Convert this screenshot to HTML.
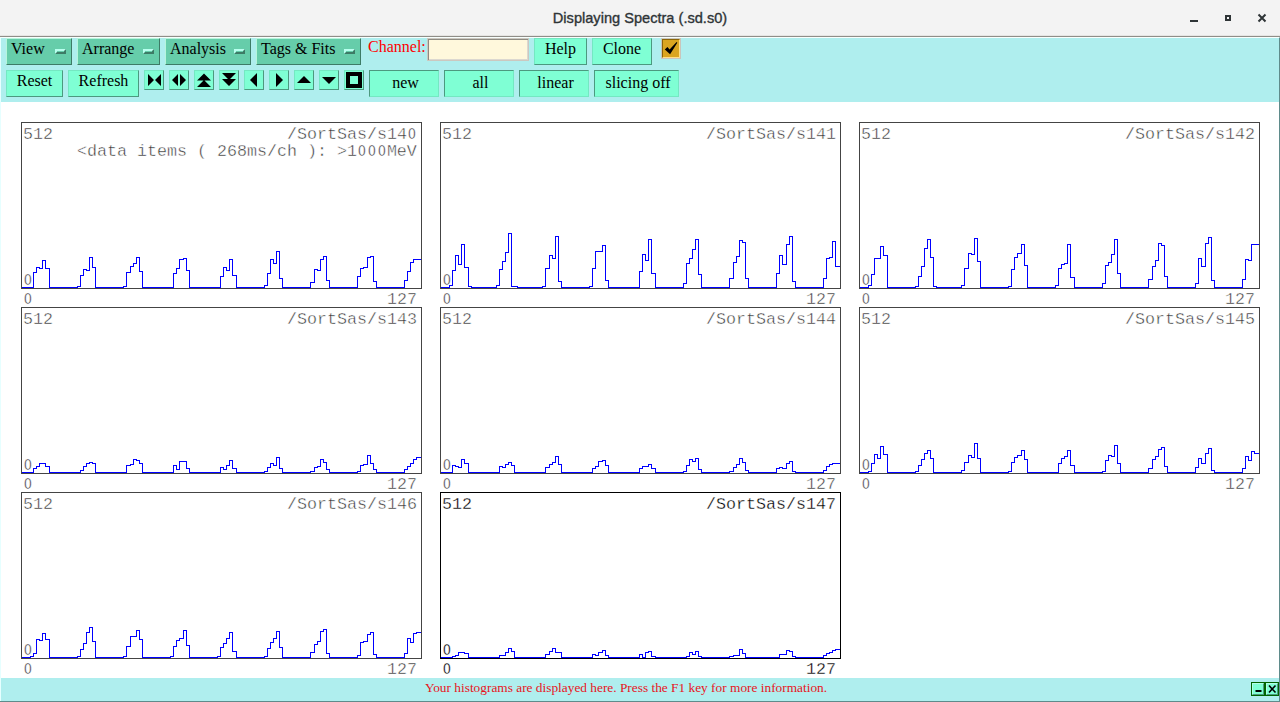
<!DOCTYPE html>
<html><head><meta charset="utf-8"><style>
*{margin:0;padding:0;box-sizing:border-box}
html,body{width:1280px;height:702px;overflow:hidden;background:#fff;position:relative}
body{font-family:"Liberation Serif",serif}
.abs{position:absolute}
#title{position:absolute;left:0;top:0;width:1280px;height:37px;background:#f3f3f3;border-bottom:1px solid #8f8d88;box-shadow:inset 0 -1px 0 #e6e5e3}
#title .tx{position:absolute;left:0;top:10px;width:1280px;text-align:center;font:14.6px "Liberation Sans",sans-serif;color:#2e3436;-webkit-text-stroke:0.35px #2e3436;line-height:17px}
#tool{position:absolute;left:0;top:37px;width:1280px;height:65px;background:#afeeee;border-top:1px solid #f8fffd;border-left:1px solid #e6ffff;border-right:1px solid #5f8b8b}
#plots{position:absolute;left:0;top:102px;width:1280px;height:576px;background:#fff;border-left:1px solid #e6ffff;border-right:1px solid #5f8b8b}
#status{position:absolute;left:0;top:678px;width:1280px;height:24px;background:#afeeee;border-bottom:1px solid #5f8b8b}
#status:before{content:"";position:absolute;left:0;top:0;width:1px;height:23px;background:#e6ffff}
#status:after{content:"";position:absolute;right:0;top:0;width:1px;height:24px;background:#5f8b8b}
.mb{position:absolute;top:38px;height:27px;background:#66cdaa;border:1px solid;border-color:#b6f5dc #3d7b66 #3d7b66 #b6f5dc;font-size:16px;color:#000}
.mb span{position:absolute;left:4px;top:1px;line-height:18px}
.ind{position:absolute;width:11px;height:5px;top:10px;border:2px solid;border-color:#b8ffee #3d7b66 #3d7b66 #b8ffee;background:#66cdaa}
.btn{position:absolute;background:#7fffd4;border:1px solid;border-color:#74e8c2 #4c997f #4c997f #74e8c2;font-size:16px;color:#000;text-align:center}
.sk{border-color:#4c997f #74e8c2 #74e8c2 #4c997f;padding-left:3px}
.ib{position:absolute;top:70px;width:20px;height:20px;background:#7fffd4;border:1px solid;border-color:#74e8c2 #4c997f #4c997f #74e8c2}
.ib svg{position:absolute;left:-1px;top:-1px}
.frame{position:absolute;width:401px;height:167px;border:1px solid #444}
.hs{position:absolute}
.t{position:absolute;font-family:"Liberation Mono",monospace;font-size:16.667px;line-height:17px;color:#333;white-space:pre;-webkit-text-stroke:0.45px #fff}
.t2{position:absolute;font-family:"Liberation Mono",monospace;font-size:16.667px;line-height:17px;color:#333;white-space:pre;-webkit-text-stroke:0.45px #fff}
.z{display:inline-block;width:10px;text-align:center;transform:scaleX(0.78)}
.r{text-align:right}
.frame.sel{border-color:#000}
.t.sel{color:#000;-webkit-text-stroke:0.3px #fff}
</style></head><body>
<div id="title"><div class="tx">Displaying Spectra (.sd.s0)</div>
<svg class="abs" style="left:1180px;top:5px" width="100" height="25" viewBox="1180 5 100 25">
<rect x="1190" y="20" width="8" height="2" fill="#2e3436"/>
<rect x="1226" y="16" width="4" height="4" fill="none" stroke="#2e3436" stroke-width="2"/>
<path d="M1258.5 14.5 L1265.5 21.5 M1265.5 14.5 L1258.5 21.5" stroke="#2e3436" stroke-width="2"/>
</svg></div>
<div id="tool"></div>
<div id="plots"></div>
<div id="status"><div class="abs" style="left:0;top:2px;width:1252px;text-align:center;font-size:13.35px;color:#e8141c;line-height:16px">Your histograms are displayed here. Press the F1 key for more information.</div>
<div class="abs" style="left:1251px;top:4px;width:28px;height:14px;background:#006400"></div>
<div class="abs" style="left:1252px;top:5px;width:12px;height:12px;background:#7fffd4;border:1px solid;border-color:#b2ffe6 #4c997f #4c997f #b2ffe6"></div>
<div class="abs" style="left:1266px;top:5px;width:12px;height:12px;background:#7fffd4;border:1px solid;border-color:#b2ffe6 #4c997f #4c997f #b2ffe6"></div>
<svg class="abs" style="left:1251px;top:4px" width="28" height="14"><rect x="4.5" y="8" width="6" height="2" fill="#000"/><path d="M18 3.5 L24.5 10.5 M24.5 3.5 L18 10.5" stroke="#000" stroke-width="1.6"/></svg>
</div>

<div class="mb" style="left:6px;width:66px"><span>View</span><div class="ind" style="left:48px"></div></div>
<div class="mb" style="left:77px;width:83px"><span>Arrange</span><div class="ind" style="left:65px"></div></div>
<div class="mb" style="left:165px;width:86px"><span>Analysis</span><div class="ind" style="left:68px"></div></div>
<div class="mb" style="left:256px;width:105px"><span>Tags &amp; Fits</span><div class="ind" style="left:87px"></div></div>
<div class="abs" style="left:368px;top:38px;font-size:16px;color:#ff0000;line-height:18px">Channel:</div>
<div class="abs" style="left:427px;top:38px;width:102px;height:23px;background:#fff8dc;border:1px solid #ccc8c0;box-shadow:inset 1px 1px 0 #8e8b82, inset -1px -1px 0 #dcd8d0"></div>
<div class="btn" style="left:534px;top:38px;width:53px;height:27px;line-height:20px">Help</div>
<div class="btn" style="left:592px;top:38px;width:60px;height:27px;line-height:20px">Clone</div>
<div class="abs" style="left:661px;top:38px;width:20px;height:21px;background:#daa520;border:1px solid #c9c5bc"></div>
<div class="abs" style="left:662px;top:39px;width:18px;height:19px;border:1px solid;border-color:#8b6508 #ffe08a #ffe08a #8b6508"></div>
<svg class="abs" style="left:656px;top:34px" width="30" height="30" viewBox="656 34 30 30"><path d="M664.8 49.6 L667.4 46.9 L669.6 49.4 L676.6 41.9 L677.3 42.7 L670.1 54.2 Z" fill="#000"/></svg>

<div class="btn" style="left:6px;top:70px;width:57px;height:27px;line-height:20px">Reset</div>
<div class="btn" style="left:68px;top:70px;width:71px;height:27px;line-height:20px">Refresh</div>
<div class="ib" style="left:144px"></div>
<div class="ib" style="left:169px"></div>
<div class="ib" style="left:194px"></div>
<div class="ib" style="left:219px"></div>
<div class="ib" style="left:244px"></div>
<div class="ib" style="left:269px"></div>
<div class="ib" style="left:294px"></div>
<div class="ib" style="left:319px"></div>
<div class="ib" style="left:344px"></div>
<svg class="abs" style="left:140px;top:66px" width="230" height="30" viewBox="140 66 230 30">
<path d="M148 74 L154 80 L148 86 Z M161 74 L155 80 L161 86 Z" fill="#000"/>
<path d="M178 74 L172 80 L178 86 Z M180 74 L186 80 L180 86 Z" fill="#000"/>
<path d="M204 73.5 L211 80.5 L197 80.5 Z M204 80 L211 87 L197 87 Z" fill="#000"/>
<path d="M222 73 L236 73 L229 80 Z M222 79 L236 79 L229 86 Z" fill="#000"/>
<path d="M257 73 L257 87 L250 80 Z" fill="#000"/>
<path d="M276 73 L276 87 L283 80 Z" fill="#000"/>
<path d="M304 76 L311 83 L297 83 Z" fill="#000"/>
<path d="M322 77 L336 77 L329 84 Z" fill="#000"/>
<path d="M346 72 H362 V88 H346 Z M350 76 V84 H358 V76 Z" fill="#000" fill-rule="evenodd"/>
</svg>
<div class="btn sk" style="left:369px;top:70px;width:70px;height:27px;line-height:24px">new</div>
<div class="btn sk" style="left:444px;top:70px;width:70px;height:27px;line-height:24px">all</div>
<div class="btn sk" style="left:519px;top:70px;width:70px;height:27px;line-height:24px">linear</div>
<div class="btn sk" style="left:594px;top:70px;width:85px;height:27px;line-height:24px">slicing off</div>

<div class="frame" style="left:21px;top:122px"></div>
<div class="t" style="left:23px;top:126px">512</div>
<div class="t r" style="left:221px;top:126px;width:196px">/SortSas/s14<span class="z">O</span></div><div class="t2" style="left:77px;top:143px">&lt;data items ( 268ms/ch ): &gt;1<span class="z">O</span><span class="z">O</span><span class="z">O</span>MeV</div>
<div class="t" style="left:23px;top:272px"><span class="z">O</span></div>
<svg class="hs" style="left:21px;top:122px" width="401" height="167" viewBox="21 122 401 167"><path d="M21.5 287.5H33.5V272.5H36.5V267.5H39.5V268.5H42.5V260.5H45.5V268.5H49.5V287.5H77.5V286.5H80.5V275.5H83.5V269.5H86.5V270.5H89.5V257.5H92.5V267.5H95.5V287.5H123.5V286.5H126.5V272.5H130.5V266.5H133.5V263.5H136.5V257.5H139.5V271.5H142.5V287.5H173.5V273.5H176.5V268.5H179.5V259.5H183.5V258.5H186.5V270.5H189.5V287.5H220.5V276.5H223.5V267.5H226.5V270.5H229.5V259.5H232.5V275.5H236.5V287.5H264.5V285.5H267.5V273.5H270.5V259.5H273.5V263.5H276.5V251.5H279.5V278.5H282.5V287.5H310.5V282.5H314.5V269.5H317.5V270.5H320.5V259.5H323.5V256.5H326.5V280.5H329.5V287.5H357.5V276.5H360.5V268.5H363.5V267.5H367.5V257.5H370.5V256.5H373.5V281.5H376.5V287.5H404.5V280.5H407.5V271.5H410.5V262.5H413.5V259.5H421.0" fill="none" stroke="#0000ff" stroke-width="1" shape-rendering="crispEdges"/></svg>
<div class="t" style="left:23px;top:291px"><span class="z">O</span></div>
<div class="t r" style="left:321px;top:291px;width:96px">127</div>
<div class="frame" style="left:440px;top:122px"></div>
<div class="t" style="left:442px;top:126px">512</div>
<div class="t r" style="left:640px;top:126px;width:196px">/SortSas/s141</div>
<div class="t" style="left:442px;top:272px"><span class="z">O</span></div>
<svg class="hs" style="left:440px;top:122px" width="401" height="167" viewBox="440 122 401 167"><path d="M440.5 287.5H449.5V285.5H452.5V270.5H455.5V255.5H458.5V264.5H461.5V244.5H464.5V267.5H468.5V286.5H471.5V287.5H496.5V285.5H499.5V269.5H502.5V261.5H505.5V252.5H508.5V233.5H511.5V286.5H517.5V287.5H542.5V286.5H545.5V268.5H549.5V255.5H552.5V258.5H555.5V236.5H558.5V281.5H561.5V287.5H589.5V286.5H592.5V268.5H595.5V251.5H602.5V245.5H605.5V280.5H608.5V287.5H639.5V271.5H642.5V254.5H645.5V260.5H648.5V239.5H651.5V273.5H655.5V287.5H683.5V283.5H686.5V263.5H689.5V258.5H692.5V249.5H695.5V239.5H698.5V274.5H701.5V287.5H729.5V278.5H733.5V262.5H736.5V256.5H739.5V240.5H742.5V242.5H745.5V278.5H748.5V287.5H776.5V273.5H779.5V255.5H782.5V264.5H786.5V244.5H789.5V236.5H792.5V281.5H795.5V287.5H823.5V278.5H826.5V258.5H829.5V257.5H832.5V241.5H835.5V266.5H840.0" fill="none" stroke="#0000ff" stroke-width="1" shape-rendering="crispEdges"/></svg>
<div class="t" style="left:442px;top:291px"><span class="z">O</span></div>
<div class="t r" style="left:740px;top:291px;width:96px">127</div>
<div class="frame" style="left:859px;top:122px"></div>
<div class="t" style="left:861px;top:126px">512</div>
<div class="t r" style="left:1059px;top:126px;width:196px">/SortSas/s142</div>
<div class="t" style="left:861px;top:272px"><span class="z">O</span></div>
<svg class="hs" style="left:859px;top:122px" width="401" height="167" viewBox="859 122 401 167"><path d="M859.5 287.5H868.5V285.5H871.5V274.5H874.5V258.5H880.5V246.5H883.5V255.5H887.5V287.5H915.5V286.5H918.5V276.5H921.5V266.5H924.5V248.5H927.5V239.5H930.5V257.5H933.5V286.5H936.5V287.5H961.5V285.5H964.5V268.5H968.5V253.5H971.5V254.5H974.5V238.5H977.5V261.5H980.5V287.5H1008.5V286.5H1011.5V269.5H1014.5V257.5H1017.5V253.5H1021.5V244.5H1024.5V265.5H1027.5V287.5H1055.5V285.5H1058.5V268.5H1061.5V264.5H1064.5V263.5H1067.5V244.5H1070.5V277.5H1074.5V287.5H1102.5V283.5H1105.5V265.5H1108.5V262.5H1111.5V254.5H1114.5V239.5H1117.5V273.5H1120.5V287.5H1148.5V279.5H1152.5V266.5H1155.5V260.5H1158.5V243.5H1161.5V245.5H1164.5V276.5H1167.5V287.5H1195.5V283.5H1198.5V258.5H1201.5V266.5H1205.5V243.5H1208.5V237.5H1211.5V280.5H1214.5V287.5H1242.5V279.5H1245.5V259.5H1248.5V260.5H1251.5V244.5H1259.0" fill="none" stroke="#0000ff" stroke-width="1" shape-rendering="crispEdges"/></svg>
<div class="t" style="left:861px;top:291px"><span class="z">O</span></div>
<div class="t r" style="left:1159px;top:291px;width:96px">127</div>
<div class="frame" style="left:21px;top:307px"></div>
<div class="t" style="left:23px;top:311px">512</div>
<div class="t r" style="left:221px;top:311px;width:196px">/SortSas/s143</div>
<div class="t" style="left:23px;top:457px"><span class="z">O</span></div>
<svg class="hs" style="left:21px;top:307px" width="401" height="167" viewBox="21 307 401 167"><path d="M21.5 472.5H33.5V468.5H36.5V466.5H39.5V463.5H45.5V466.5H49.5V472.5H80.5V470.5H83.5V466.5H86.5V463.5H89.5V462.5H92.5V463.5H95.5V472.5H126.5V465.5H130.5V464.5H133.5V459.5H136.5V460.5H139.5V463.5H142.5V472.5H173.5V465.5H176.5V469.5H179.5V461.5H186.5V468.5H189.5V472.5H220.5V467.5H223.5V469.5H226.5V465.5H229.5V460.5H232.5V468.5H236.5V472.5H264.5V471.5H267.5V467.5H270.5V463.5H273.5V465.5H276.5V457.5H279.5V468.5H282.5V472.5H310.5V471.5H314.5V467.5H317.5V466.5H320.5V459.5H323.5V462.5H326.5V469.5H329.5V472.5H357.5V471.5H360.5V465.5H363.5V464.5H367.5V455.5H370.5V463.5H373.5V469.5H376.5V472.5H404.5V469.5H407.5V466.5H410.5V463.5H413.5V459.5H416.5V457.5H421.0" fill="none" stroke="#0000ff" stroke-width="1" shape-rendering="crispEdges"/></svg>
<div class="t" style="left:23px;top:476px"><span class="z">O</span></div>
<div class="t r" style="left:321px;top:476px;width:96px">127</div>
<div class="frame" style="left:440px;top:307px"></div>
<div class="t" style="left:442px;top:311px">512</div>
<div class="t r" style="left:640px;top:311px;width:196px">/SortSas/s144</div>
<div class="t" style="left:442px;top:457px"><span class="z">O</span></div>
<svg class="hs" style="left:440px;top:307px" width="401" height="167" viewBox="440 307 401 167"><path d="M440.5 472.5H452.5V465.5H455.5V466.5H458.5V467.5H461.5V459.5H464.5V463.5H468.5V472.5H499.5V466.5H502.5V467.5H505.5V464.5H508.5V462.5H511.5V465.5H514.5V472.5H545.5V467.5H549.5V464.5H552.5V462.5H555.5V456.5H558.5V464.5H561.5V472.5H592.5V468.5H595.5V466.5H598.5V461.5H602.5V460.5H605.5V465.5H608.5V472.5H639.5V468.5H642.5V466.5H648.5V464.5H651.5V468.5H655.5V472.5H683.5V471.5H686.5V465.5H689.5V459.5H692.5V461.5H695.5V458.5H698.5V469.5H701.5V472.5H729.5V471.5H733.5V467.5H736.5V464.5H739.5V458.5H742.5V462.5H745.5V470.5H748.5V472.5H776.5V468.5H779.5V467.5H782.5V468.5H786.5V463.5H789.5V461.5H792.5V471.5H795.5V472.5H823.5V470.5H826.5V466.5H829.5V464.5H832.5V463.5H840.0" fill="none" stroke="#0000ff" stroke-width="1" shape-rendering="crispEdges"/></svg>
<div class="t" style="left:442px;top:476px"><span class="z">O</span></div>
<div class="t r" style="left:740px;top:476px;width:96px">127</div>
<div class="frame" style="left:859px;top:307px"></div>
<div class="t" style="left:861px;top:311px">512</div>
<div class="t r" style="left:1059px;top:311px;width:196px">/SortSas/s145</div>
<div class="t" style="left:861px;top:457px"><span class="z">O</span></div>
<svg class="hs" style="left:859px;top:307px" width="401" height="167" viewBox="859 307 401 167"><path d="M859.5 472.5H868.5V471.5H871.5V463.5H874.5V454.5H877.5V458.5H880.5V446.5H883.5V454.5H887.5V472.5H915.5V471.5H918.5V465.5H921.5V459.5H924.5V453.5H927.5V450.5H930.5V458.5H933.5V472.5H961.5V470.5H964.5V462.5H968.5V455.5H971.5V457.5H974.5V443.5H977.5V458.5H980.5V472.5H1008.5V471.5H1011.5V462.5H1014.5V457.5H1017.5V455.5H1021.5V450.5H1024.5V459.5H1027.5V472.5H1058.5V463.5H1061.5V458.5H1064.5V456.5H1067.5V450.5H1070.5V465.5H1074.5V472.5H1102.5V471.5H1105.5V460.5H1108.5V455.5H1111.5V456.5H1114.5V445.5H1117.5V463.5H1120.5V472.5H1148.5V468.5H1152.5V459.5H1155.5V456.5H1158.5V449.5H1161.5V447.5H1164.5V466.5H1167.5V472.5H1195.5V467.5H1198.5V458.5H1201.5V463.5H1205.5V453.5H1208.5V448.5H1211.5V470.5H1214.5V472.5H1242.5V468.5H1245.5V456.5H1248.5V460.5H1251.5V451.5H1254.5V453.5H1259.0" fill="none" stroke="#0000ff" stroke-width="1" shape-rendering="crispEdges"/></svg>
<div class="t" style="left:861px;top:476px"><span class="z">O</span></div>
<div class="t r" style="left:1159px;top:476px;width:96px">127</div>
<div class="frame" style="left:21px;top:492px"></div>
<div class="t" style="left:23px;top:496px">512</div>
<div class="t r" style="left:221px;top:496px;width:196px">/SortSas/s146</div>
<div class="t" style="left:23px;top:642px"><span class="z">O</span></div>
<svg class="hs" style="left:21px;top:492px" width="401" height="167" viewBox="21 492 401 167"><path d="M21.5 657.5H30.5V656.5H33.5V653.5H36.5V639.5H39.5V640.5H42.5V633.5H45.5V639.5H49.5V657.5H77.5V656.5H80.5V649.5H83.5V643.5H86.5V632.5H89.5V627.5H92.5V641.5H95.5V657.5H123.5V656.5H126.5V646.5H130.5V636.5H136.5V630.5H139.5V639.5H142.5V657.5H170.5V656.5H173.5V646.5H176.5V640.5H179.5V638.5H183.5V630.5H186.5V645.5H189.5V657.5H217.5V656.5H220.5V647.5H223.5V643.5H226.5V638.5H229.5V632.5H232.5V651.5H236.5V657.5H264.5V656.5H267.5V648.5H270.5V642.5H273.5V638.5H276.5V631.5H279.5V647.5H282.5V657.5H310.5V652.5H314.5V644.5H317.5V641.5H320.5V631.5H323.5V629.5H326.5V653.5H329.5V657.5H357.5V655.5H360.5V642.5H363.5V641.5H367.5V634.5H370.5V632.5H373.5V654.5H376.5V657.5H404.5V653.5H407.5V638.5H410.5V642.5H413.5V633.5H416.5V632.5H421.0" fill="none" stroke="#0000ff" stroke-width="1" shape-rendering="crispEdges"/></svg>
<div class="t" style="left:23px;top:661px"><span class="z">O</span></div>
<div class="t r" style="left:321px;top:661px;width:96px">127</div>
<div class="frame sel" style="left:440px;top:492px"></div>
<div class="t sel" style="left:442px;top:496px">512</div>
<div class="t r sel" style="left:640px;top:496px;width:196px">/SortSas/s147</div>
<div class="t sel" style="left:442px;top:642px"><span class="z">O</span></div>
<svg class="hs" style="left:440px;top:492px" width="401" height="167" viewBox="440 492 401 167"><path d="M440.5 657.5H452.5V656.5H455.5V655.5H458.5V652.5H464.5V653.5H468.5V657.5H499.5V655.5H505.5V652.5H508.5V648.5H511.5V651.5H514.5V657.5H545.5V654.5H549.5V651.5H552.5V648.5H555.5V652.5H561.5V657.5H592.5V654.5H595.5V655.5H598.5V652.5H602.5V650.5H605.5V655.5H608.5V657.5H639.5V654.5H642.5V657.5H645.5V652.5H648.5V651.5H651.5V656.5H655.5V657.5H686.5V656.5H689.5V652.5H692.5V654.5H695.5V651.5H698.5V656.5H701.5V657.5H729.5V656.5H733.5V655.5H739.5V649.5H742.5V653.5H745.5V657.5H779.5V654.5H786.5V650.5H789.5V651.5H792.5V656.5H795.5V657.5H823.5V655.5H826.5V653.5H829.5V652.5H832.5V650.5H835.5V649.5H840.0" fill="none" stroke="#0000ff" stroke-width="1" shape-rendering="crispEdges"/></svg>
<div class="t sel" style="left:442px;top:661px"><span class="z">O</span></div>
<div class="t r sel" style="left:740px;top:661px;width:96px">127</div>
</body></html>
